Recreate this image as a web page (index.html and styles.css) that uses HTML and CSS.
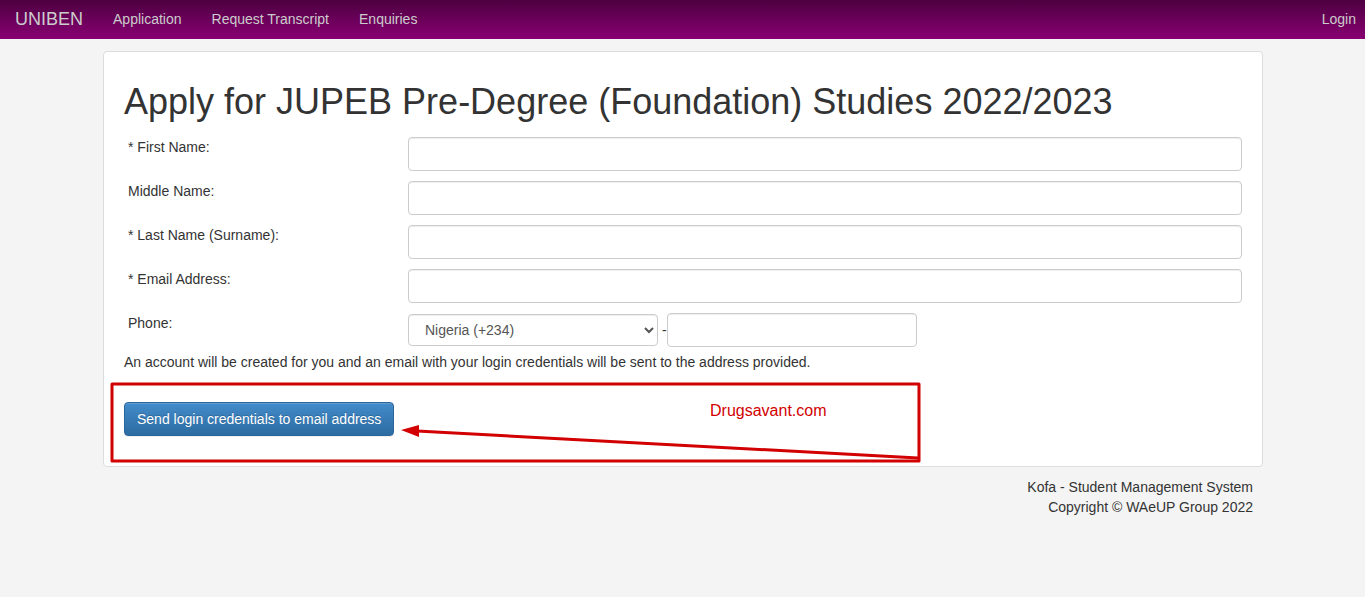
FILE: index.html
```html
<!DOCTYPE html>
<html lang="en">
<head>
    <meta charset="UTF-8">
    <meta name="viewport" content="width=device-width, initial-scale=1.0">
    <title>Apply for JUPEB Pre-Degree (Foundation) Studies 2022/2023</title>
    <link rel="stylesheet" href="styles.css">
</head>
<body>
    <nav class="navbar">
        <a class="brand" href="#">UNIBEN</a>
        <a href="#">Application</a>
        <a href="#">Request Transcript</a>
        <a href="#">Enquiries</a>
        <a class="login" href="#">Login</a>
    </nav>

    <div class="container">
        <main class="panel">
            <h1>Apply for JUPEB Pre-Degree (Foundation) Studies 2022/2023</h1>
            <form>
                <div class="row">
                    <label for="firstName">* First Name:</label>
                    <input class="control" type="text" id="firstName">
                </div>
                <div class="row">
                    <label for="middleName">Middle Name:</label>
                    <input class="control" type="text" id="middleName">
                </div>
                <div class="row">
                    <label for="lastName">* Last Name (Surname):</label>
                    <input class="control" type="text" id="lastName">
                </div>
                <div class="row">
                    <label for="email">* Email Address:</label>
                    <input class="control" type="text" id="email">
                </div>
                <div class="row">
                    <label for="phone">Phone:</label>
                    <div class="phone">
                        <select class="control" aria-label="Country code">
                            <option>Nigeria (+234)</option>
                        </select>
                        <span>-</span>
                        <input class="control" type="text" id="phone">
                    </div>
                </div>
                <p class="info">An account will be created for you and an email with your login credentials will be sent to the address provided.</p>
                <div class="actions">
                    <button type="button">Send login credentials to email address</button>
                    <!-- Red frame, arrow and site name over the button -->
                    <svg class="marker" width="812" height="82" viewBox="0 0 812 82" aria-hidden="true">
                        <rect x="3" y="3" width="807" height="77" fill="none" stroke="#d20000" stroke-width="3" stroke-linejoin="round"/>
                        <path d="M308 50 L809 77" stroke="#d20000" stroke-width="3"/>
                        <path d="M292 49 L310 44 L310 56 Z" fill="#d20000"/>
                    </svg>
                    <span class="site">Drugsavant.com</span>
                </div>
            </form>
        </main>

        <footer>
            Kofa - Student Management System<br>
            Copyright © WAeUP Group 2022
        </footer>
    </div>
</body>
</html>
```
FILE: styles.css
```css
* {
    box-sizing: border-box;
}

body {
    margin: 0;
    background-color: #f4f4f4;
    color: #333;
    font-family: "Liberation Sans", Arial, sans-serif;
    font-size: 14px;
    line-height: 20px;
}

/* Navigation */
.navbar {
    display: flex;
    align-items: center;
    gap: 30px;
    height: 39px;
    padding: 0 9px 1px 15px;
    background-image: linear-gradient(#4d0040, #880073);
}

.navbar a {
    color: #ccc;
    text-decoration: none;
}

.navbar .brand {
    font-size: 18px;
}

.navbar .login {
    margin-left: auto;
}

.container {
    padding: 12px 102px 0 103px;
}

/* Form panel */
.panel {
    margin-bottom: 10px;
    padding: 20px;
    background-color: #fff;
    border: 1px solid #ddd;
    border-radius: 4px;
}

h1 {
    margin: 10px 0 15px;
    font-size: 36px;
    font-weight: normal;
    line-height: 40px;
}

.row {
    display: grid;
    grid-template-columns: 284px 1fr;
    margin-bottom: 10px;
}

.row label {
    padding-left: 4px;
}

.control {
    width: 100%;
    height: 34px;
    padding: 6px 12px;
    border: 1px solid #ccc;
    border-radius: 4px;
    background-color: #fff;
    box-shadow: inset 0 1px 1px rgba(0, 0, 0, 0.07);
    color: #555;
    font-family: inherit;
    font-size: 14px;
}

.phone {
    display: flex;
    align-items: center;
}

.phone .control {
    width: 250px;
}

.phone select {
    height: 32px;
    margin-right: 4px;
    padding: 0 0 0 12px;
}

.info {
    margin: -5px 0 30px;
}

.actions {
    position: relative;
    margin-bottom: 10px;
}

button {
    display: block;
    height: 34px;
    padding: 0 12px;
    border: 1px solid #2b669a;
    border-radius: 4px;
    background-image: linear-gradient(#428bca, #2d6ca2);
    box-shadow: inset 0 1px 0 rgba(255, 255, 255, 0.15), 0 1px 1px rgba(0, 0, 0, 0.07);
    color: #fff;
    font-family: inherit;
    font-size: 14px;
    text-shadow: 0 -1px 0 rgba(0, 0, 0, 0.2);
}

.marker {
    position: absolute;
    top: -21px;
    left: -15px;
    pointer-events: none;
}

.site {
    position: absolute;
    top: -1px;
    left: 586px;
    color: #d20000;
    font-size: 16px;
}

footer {
    padding-right: 10px;
    text-align: right;
}
```
